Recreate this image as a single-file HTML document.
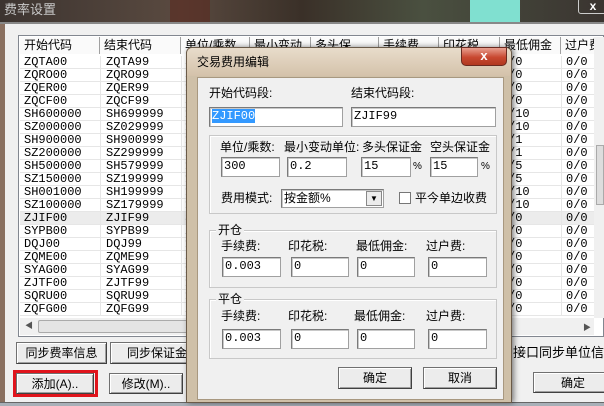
<!DOCTYPE html>
<html><head><meta charset="utf-8"><style>
*{margin:0;padding:0;box-sizing:border-box}
body{width:604px;height:406px;overflow:hidden;position:relative;background:#f0f0f0;font-family:"Liberation Sans","Noto Sans CJK SC",sans-serif;font-size:12px;color:#000}
.a{position:absolute}
.t{position:absolute;white-space:nowrap;line-height:14px}
.inp{position:absolute;background:#fff;border:1px solid #a0a0a0;border-top-color:#7a7a7a;border-left-color:#7a7a7a;box-shadow:inset 1px 1px 0 #c8c8c8;font-family:"Liberation Mono",monospace;font-size:12px;line-height:17px;padding-left:2px}
.btn{position:absolute;background:#ececec;border:1px solid #707070;border-right-color:#404040;border-bottom-color:#404040;box-shadow:inset 1px 1px 0 #fff,inset -1px -1px 0 #a0a0a0;text-align:center;line-height:20px}
.grp{position:absolute;border:1px solid #c8c8c8;box-shadow:1px 1px 0 #fff inset}
.row{position:absolute;left:20px;width:574px;height:13px;border-bottom:1px solid #e6e6e6;font-family:"Liberation Mono",monospace;font-size:12px;line-height:13px}
.row span{position:absolute}
.hd{position:absolute;top:37px;height:17px;border-right:1px solid #a0a0a0;background:#fafafa;padding-left:4px;line-height:17px;font-size:12px;white-space:nowrap;overflow:hidden}
</style></head><body>
<div class="a" style="left:0;top:0;width:604px;height:22px;background:linear-gradient(90deg,#3c3430,#5a4a40 30%,#3a3028 50%,#4a5040 70%,#3a3430)"></div>
<div class="a" style="left:170px;top:0;width:40px;height:22px;background:#5a2a20;opacity:.6"></div>
<div class="a" style="left:470px;top:0;width:50px;height:22px;background:#80e0d0"></div>
<div class="t" style="left:4px;top:3px;color:#c8c8c8;font-size:13px">费率设置</div>
<div class="a" style="left:578px;top:-2px;width:30px;height:16px;border:1px solid #ccc;border-radius:3px;color:#fff;font-weight:bold;text-align:center;line-height:14px">x</div>
<div class="a" style="left:0;top:22px;width:604px;height:2px;background:#888"></div>
<div class="a" style="left:0;top:24px;width:5px;height:378px;background:#8a7060"></div>
<div class="a" style="left:18px;top:35px;width:586px;height:302px;background:#fff;border:1px solid #828790"></div>
<div class="hd" style="left:20px;width:80px">开始代码</div>
<div class="hd" style="left:100px;width:81px">结束代码</div>
<div class="hd" style="left:181px;width:69px">单位/乘数</div>
<div class="hd" style="left:250px;width:61px">最小变动</div>
<div class="hd" style="left:311px;width:68px">多头保</div>
<div class="hd" style="left:379px;width:60px">手续费</div>
<div class="hd" style="left:439px;width:61px">印花税</div>
<div class="hd" style="left:500px;width:61px">最低佣金</div>
<div class="hd" style="left:561px;width:34px">过户费</div>
<div class="a" style="left:594px;top:37px;width:10px;height:281px;background:#f0f0f0"></div>
<div class="a" style="left:596px;top:145px;width:8px;height:60px;background:#ddd;border:1px solid #aaa"></div>
<div id="rows"></div>
<div class="a" style="left:20px;top:318px;width:574px;height:17px;background:#f0f0f0"></div>
<div class="a" style="left:38px;top:320px;width:160px;height:13px;background:#e4e4e4;border:1px solid #aaa;border-radius:2px"></div>
<div class="t" style="left:25px;top:319px;font-size:8px;color:#555">◀</div>
<div class="t" style="left:583px;top:321px;font-size:8px;color:#555">▶</div>
<div class="btn" style="left:16px;top:342px;width:91px;height:22px">同步费率信息</div>
<div class="btn" style="left:110px;top:342px;width:90px;height:22px;text-align:left;padding-left:16px">同步保证金</div>
<div class="a" style="left:13px;top:370px;width:85px;height:27px;border:3px solid #e0141c"></div>
<div class="btn" style="left:16px;top:373px;width:78px;height:21px">添加(A)..</div>
<div class="btn" style="left:109px;top:373px;width:74px;height:21px">修改(M)..</div>
<div class="t" style="left:513px;top:346px;font-size:13px">接口同步单位信息</div>
<div class="btn" style="left:533px;top:372px;width:80px;height:21px">确定</div>
<div class="a" style="left:0;top:402px;width:604px;height:4px;background:#a8b0b8;border-top:1px solid #666"></div>
<div class="a" style="left:186px;top:47px;width:326px;height:356px;background:#cfc0a8;border:1px solid #6a5a48;border-radius:6px 6px 0 0;box-shadow:2px 0 6px rgba(0,0,0,.5)"></div>
<div class="a" style="left:187px;top:48px;width:324px;height:28px;background:linear-gradient(#e8dccb,#d4c2aa);border-radius:5px 5px 0 0"></div>
<div class="t" style="left:197px;top:55px;font-size:12px">交易费用编辑</div>
<div class="a" style="left:461px;top:47px;width:46px;height:19px;background:linear-gradient(#e8a090,#c84830 55%,#b03820);border:1px solid #6a2a20;border-radius:0 0 5px 5px;color:#fff;font-weight:bold;text-align:center;line-height:16px;font-size:13px">x</div>
<div class="a" style="left:197px;top:77px;width:307px;height:323px;background:#f0f0f0;border:1px solid #a89880"></div>
<div class="t" style="left:209px;top:86px">开始代码段:</div>
<div class="t" style="left:351px;top:86px">结束代码段:</div>
<div class="inp" style="left:209px;top:107px;width:134px;height:20px"><span style="background:#3399ff;color:#fff">ZJIF00</span></div>
<div class="inp" style="left:351px;top:107px;width:145px;height:20px">ZJIF99</div>
<div class="grp" style="left:209px;top:135px;width:288px;height:79px"></div>
<div class="t" style="left:220px;top:140px">单位/乘数:</div>
<div class="t" style="left:284px;top:140px">最小变动单位:</div>
<div class="t" style="left:362px;top:140px">多头保证金</div>
<div class="t" style="left:430px;top:140px">空头保证金</div>
<div class="inp" style="left:221px;top:157px;width:59px;height:20px">300</div>
<div class="inp" style="left:287px;top:157px;width:60px;height:20px">0.2</div>
<div class="inp" style="left:361px;top:157px;width:50px;height:20px">15</div>
<div class="t" style="left:413px;top:160px;font-size:10px">%</div>
<div class="inp" style="left:430px;top:157px;width:48px;height:20px">15</div>
<div class="t" style="left:481px;top:160px;font-size:10px">%</div>
<div class="t" style="left:221px;top:191px">费用模式:</div>
<div class="inp" style="left:281px;top:189px;width:103px;height:19px;font-family:'Liberation Sans','Noto Sans CJK SC',sans-serif;line-height:16px">按金额%</div>
<div class="a" style="left:366px;top:191px;width:16px;height:15px;background:#ececec;border:1px solid #888;font-size:8px;text-align:center;line-height:14px">▼</div>
<div class="a" style="left:399px;top:192px;width:12px;height:12px;background:#fff;border:1px solid #777"></div>
<div class="t" style="left:415px;top:191px">平今单边收费</div>
<div class="grp" style="left:209px;top:230px;width:288px;height:58px"></div>
<div class="t" style="left:216px;top:223px;background:#f0f0f0;padding:0 2px">开仓</div>
<div class="t" style="left:221px;top:239px">手续费:</div>
<div class="t" style="left:288px;top:239px">印花税:</div>
<div class="t" style="left:356px;top:239px">最低佣金:</div>
<div class="t" style="left:426px;top:239px">过户费:</div>
<div class="inp" style="left:222px;top:257px;width:59px;height:20px">0.003</div>
<div class="inp" style="left:291px;top:257px;width:58px;height:20px">0</div>
<div class="inp" style="left:357px;top:257px;width:58px;height:20px">0</div>
<div class="inp" style="left:428px;top:257px;width:59px;height:20px">0</div>
<div class="grp" style="left:209px;top:299px;width:288px;height:60px"></div>
<div class="t" style="left:216px;top:292px;background:#f0f0f0;padding:0 2px">平仓</div>
<div class="t" style="left:221px;top:309px">手续费:</div>
<div class="t" style="left:288px;top:309px">印花税:</div>
<div class="t" style="left:354px;top:309px">最低佣金:</div>
<div class="t" style="left:426px;top:309px">过户费:</div>
<div class="inp" style="left:222px;top:329px;width:59px;height:20px">0.003</div>
<div class="inp" style="left:291px;top:329px;width:58px;height:20px">0</div>
<div class="inp" style="left:357px;top:329px;width:58px;height:20px">0</div>
<div class="inp" style="left:428px;top:329px;width:59px;height:20px">0</div>
<div class="btn" style="left:338px;top:367px;width:74px;height:22px">确定</div>
<div class="btn" style="left:423px;top:367px;width:74px;height:22px">取消</div>
<script>
var d=[["ZQTA00","ZQTA99","5","/0"],["ZQRO00","ZQRO99","5","/0"],["ZQER00","ZQER99","1","/0"],["ZQCF00","ZQCF99","5","/0"],["SH600000","SH699999","1","/10"],["SZ000000","SZ029999","1","/10"],["SH900000","SH900999","1","/1"],["SZ200000","SZ299999","1","/1"],["SH500000","SH579999","1","/5"],["SZ150000","SZ199999","1","/5"],["SH001000","SH199999","1","/10"],["SZ100000","SZ179999","1","/10"],["ZJIF00","ZJIF99","3","/0"],["SYPB00","SYPB99","2","/0"],["DQJ00","DQJ99","1","/0"],["ZQME00","ZQME99","5","/0"],["SYAG00","SYAG99","1","/0"],["ZJTF00","ZJTF99","1","/0"],["SQRU00","SQRU99","1","/0"],["ZQFG00","ZQFG99","2","/0"]];
var h="";
for(var i=0;i<d.length;i++){var r=d[i];h+='<div class="row" style="top:'+(56+13*i)+'px;'+(i==12?'background:#ececec':'')+'"><span style="left:4px">'+r[0]+'</span><span style="left:86px">'+r[1]+'</span><span style="left:165px">'+r[2]+'</span><span style="left:488px">'+r[3]+'</span><span style="left:546px">0/0</span><span style="left:80px;top:0;width:1px;height:13px;background:#e6e6e6"></span><span style="left:161px;top:0;width:1px;height:13px;background:#e6e6e6"></span><span style="left:541px;top:0;width:1px;height:13px;background:#e6e6e6"></span></div>';}
document.getElementById("rows").innerHTML=h;
</script>
</body></html>
